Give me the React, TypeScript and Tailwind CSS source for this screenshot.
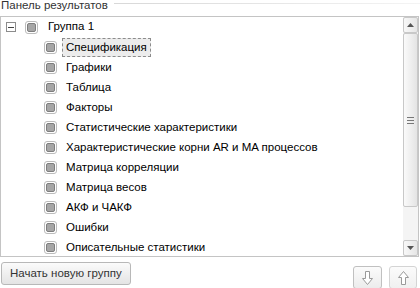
import React from 'react';

const items = [
  'Спецификация',
  'Графики',
  'Таблица',
  'Факторы',
  'Статистические характеристики',
  'Характеристические корни AR и MA процессов',
  'Матрица корреляции',
  'Матрица весов',
  'АКФ и ЧАКФ',
  'Ошибки',
  'Описательные статистики',
];

const Check = () => (
  <span className="flex h-[13px] w-[13px] items-center justify-center rounded-[3px] border border-[#bcbcbc] bg-white">
    <span className="h-[9px] w-[9px] rounded-[2px] border border-[#7e7e7e] bg-[#a6a6a6]" />
  </span>
);

const Arrow = ({ up }: { up?: boolean }) => (
  <svg width="13" height="16" viewBox="0 0 13 16" className={up ? 'rotate-180' : ''}>
    <path d="M4.5 1.5 H8.5 V8.5 H11.5 L6.5 14.5 L1.5 8.5 H4.5 Z" fill="white" stroke="#9a9a9a" strokeWidth="1" />
  </svg>
);

export default function App() {
  return (
    <div
      className="relative h-[288px] w-[420px] overflow-hidden bg-white text-[11.5px] text-black"
      style={{ fontFamily: '"Liberation Sans", Arial, sans-serif' }}
    >
      {/* заголовок панели */}
      <div className="flex h-[16px] items-start">
        <span className="mt-[-2px] pl-[1px] leading-[14px] text-[#333]">Панель результатов</span>
        <div className="ml-[6px] mt-[3px] h-px flex-1 bg-gradient-to-r from-[#d8d8d8] to-[#f4f4f4]" />
      </div>

      {/* дерево */}
      <div className="flex h-[241px] w-[419px] border border-[#c4c4c4]">
        <div className="flex-1 overflow-hidden">
          <div className="flex h-[20px] items-center">
            <span className="ml-[5px] flex h-[10px] w-[10px] items-center justify-center border border-[#8c8c8c]">
              <span className="h-px w-[6px] bg-[#444]" />
            </span>
            <span className="ml-[9px]">
              <Check />
            </span>
            <span className="ml-[10px]">Группа 1</span>
          </div>
          {items.map((t, i) => (
            <div key={t} className="flex h-[20px] items-center">
              <span className="ml-[43px]">
                <Check />
              </span>
              <span
                className={
                  i === 0
                    ? 'ml-[5px] border border-dashed border-[#8c8c8c] bg-[#ececec] px-[3px] leading-[17px]'
                    : 'ml-[5px] border border-transparent px-[3px] leading-[17px]'
                }
              >
                {t}
              </span>
            </div>
          ))}
        </div>

        {/* скроллбар */}
        <div className="flex w-[15px] flex-col bg-[#f4f4f4]">
          <div className="flex h-[16px] items-center justify-center rounded-[2px] border border-[#c8c8c8] bg-gradient-to-r from-[#f8f8f8] to-[#e6e6e6]">
            <svg width="7" height="4" viewBox="0 0 7 4">
              <path d="M3.5 0 L7 4 H0 Z" fill="#555" />
            </svg>
          </div>
          <div className="flex h-[174px] items-center justify-center rounded-[2px] border border-[#c8c8c8] bg-gradient-to-r from-[#fafafa] to-[#e4e4e4]">
            <div className="flex flex-col gap-[2px]">
              <span className="h-px w-[7px] bg-[#777]" />
              <span className="h-px w-[7px] bg-[#777]" />
              <span className="h-px w-[7px] bg-[#777]" />
            </div>
          </div>
          <div className="flex-1" />
          <div className="flex h-[16px] items-center justify-center rounded-[2px] border border-[#c8c8c8] bg-gradient-to-r from-[#f8f8f8] to-[#e6e6e6]">
            <svg width="7" height="4" viewBox="0 0 7 4">
              <path d="M0 0 H7 L3.5 4 Z" fill="#555" />
            </svg>
          </div>
        </div>
      </div>

      {/* кнопки */}
      <div className="mt-[5px] flex items-start">
        <button className="ml-[1px] h-[23px] rounded-[3px] border border-[#b8b8b8] bg-gradient-to-b from-[#fbfbfb] to-[#e4e4e4] px-[8px] text-[11.5px] text-[#333]">
          Начать новую группу
        </button>
        <div className="ml-auto mr-[3px] mt-[4px] flex gap-[7px]">
          <button className="flex h-[23px] w-[29px] items-center justify-center rounded-[3px] border border-[#c0c0c0] bg-gradient-to-b from-[#fbfbfb] to-[#ececec]">
            <Arrow />
          </button>
          <button className="flex h-[23px] w-[28px] items-center justify-center rounded-[3px] border border-[#d4d4d4] bg-gradient-to-b from-[#fbfbfb] to-[#f0f0f0]">
            <Arrow up />
          </button>
        </div>
      </div>
    </div>
  );
}
